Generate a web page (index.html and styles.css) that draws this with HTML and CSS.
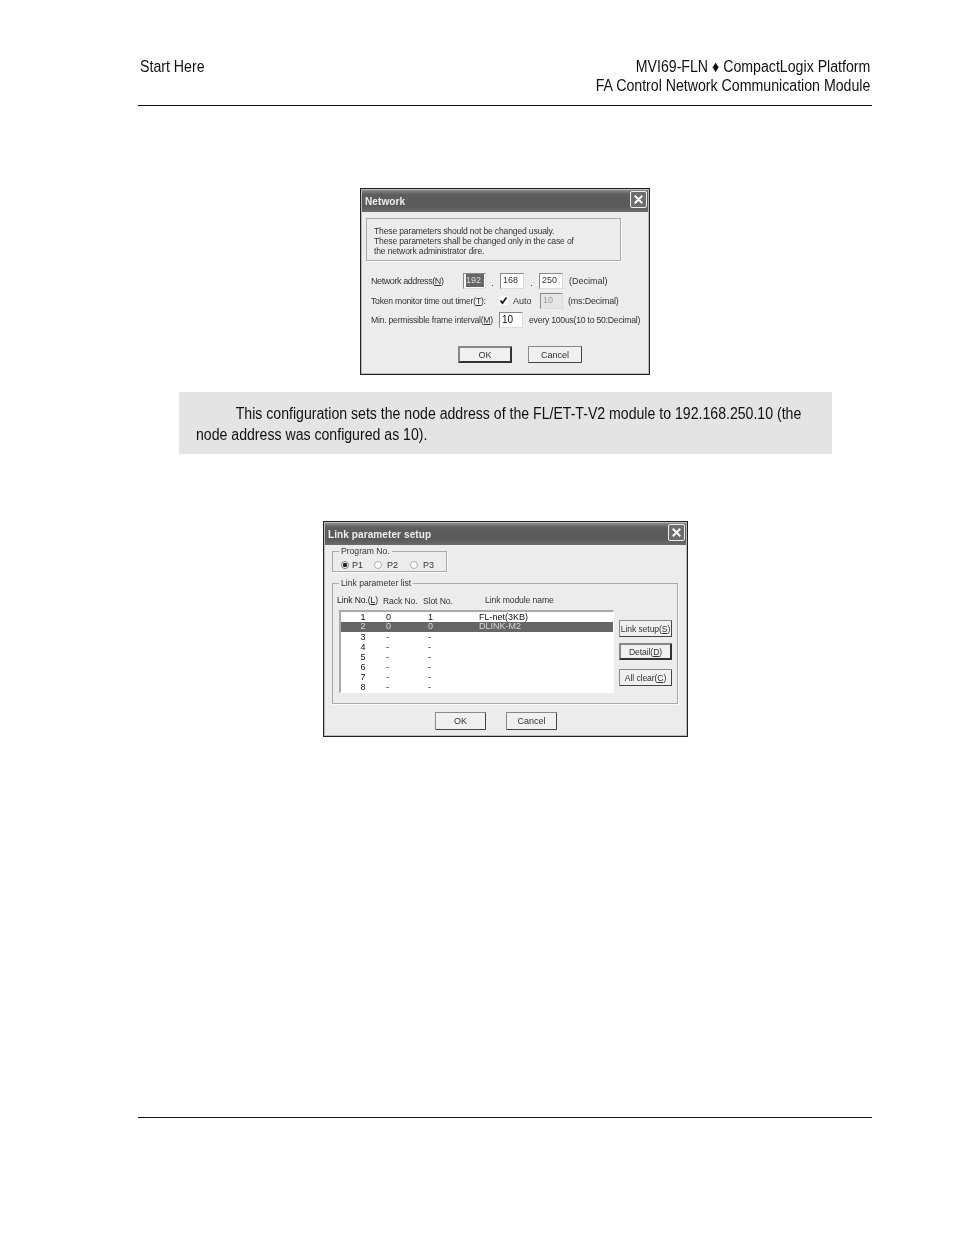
FILE: index.html
```html
<!DOCTYPE html>
<html lang="en">
<head>
<meta charset="utf-8">
<title>Start Here</title>
<link rel="stylesheet" href="styles.css">
</head>
<body>
<div class="page">
  <header class="head">
    <div class="head-left">Start Here</div>
    <div class="head-right">MVI69-FLN ♦ CompactLogix Platform<br>FA Control Network Communication Module</div>
  </header>

  <section class="dlg dlg-net">
    <div class="title"><span class="title-text">Network</span><span class="close"><svg viewBox="0 0 16 16" width="16" height="16"><path d="M4 4L12 12M12 4L4 12" stroke="#fff" stroke-width="2" fill="none"/></svg></span></div>
    <div class="net-body">
      <div class="info">These parameters should not be changed usualy.<br>These parameters shall be changed only in the case of<br>the network administrator dire.</div>
      <div class="row row-a">
        <span class="lbl lbl-a">Network address(<u>N</u>)</span>
        <span class="inp inp-sel"><b>192</b></span><span class="dot">.</span>
        <span class="inp inp-b">168</span><span class="dot">.</span>
        <span class="inp inp-b">250</span>
        <span class="after-a">(Decimal)</span>
      </div>
      <div class="row row-b">
        <span class="lbl lbl-b">Token monitor time out timer(<u>T</u>):</span>
        <span class="chk"><svg viewBox="0 0 9 9" width="9" height="9"><path d="M1.5 4.5L3.5 7L7.5 1.5" stroke="#111" stroke-width="1.7" fill="none"/></svg></span>
        <span class="auto">Auto</span>
        <span class="inp inp-off">10</span>
        <span class="after-b">(ms:Decimal)</span>
      </div>
      <div class="row row-c">
        <span class="lbl lbl-b">Min. permissible frame interval(<u>M</u>)</span>
        <span class="inp inp-c">10</span>
        <span class="after-c">every 100us(10 to 50:Decimal)</span>
      </div>
      <div class="btns btns-net">
        <span class="btn btn-def btn-net">OK</span>
        <span class="btn btn-net">Cancel</span>
      </div>
    </div>
  </section>

  <aside class="note"><p class="note-text">This configuration sets the node address of the FL/ET-T-V2 module to 192.168.250.10 (the node address was configured as 10).</p></aside>

  <section class="dlg dlg-link">
    <div class="title"><span class="title-text">Link parameter setup</span><span class="close"><svg viewBox="0 0 16 16" width="16" height="16"><path d="M4 4L12 12M12 4L4 12" stroke="#fff" stroke-width="2" fill="none"/></svg></span></div>
    <div class="link-body">
      <fieldset class="grp grp-prog">
        <legend>Program No.</legend>
        <div class="radios">
          <span class="radio radio-on"></span><span class="rl">P1</span>
          <span class="radio"></span><span class="rl">P2</span>
          <span class="radio"></span><span class="rl">P3</span>
        </div>
      </fieldset>
      <fieldset class="grp grp-list">
        <legend>Link parameter list</legend>
        <div class="cols">
          <span class="c1">Link No.(<u>L</u>)</span><span class="c2">Rack No.</span><span class="c3">Slot No.</span><span class="c4">Link module name</span>
        </div>
        <div class="list-wrap">
          <div class="list">
            <div class="li"><span>1</span><span>0</span><span>1</span><span>FL-net(3KB)</span></div>
            <div class="li li-sel"><span>2</span><span>0</span><span>0</span><span>DLINK-M2</span></div>
            <div class="li"><span>3</span><span>-</span><span>-</span><span></span></div>
            <div class="li"><span>4</span><span>-</span><span>-</span><span></span></div>
            <div class="li"><span>5</span><span>-</span><span>-</span><span></span></div>
            <div class="li"><span>6</span><span>-</span><span>-</span><span></span></div>
            <div class="li"><span>7</span><span>-</span><span>-</span><span></span></div>
            <div class="li"><span>8</span><span>-</span><span>-</span><span></span></div>
          </div>
          <div class="side">
            <span class="btn btn-side">Link setup(<u>S</u>)</span>
            <span class="btn btn-side btn-def">Detail(<u>D</u>)</span>
            <span class="btn btn-side">All clear(<u>C</u>)</span>
          </div>
        </div>
      </fieldset>
      <div class="btns btns-link">
        <span class="btn btn-link">OK</span>
        <span class="btn btn-link">Cancel</span>
      </div>
    </div>
  </section>

  <footer class="foot"></footer>
</div>
</body>
</html>
```
FILE: styles.css
```css
* { box-sizing: border-box; }
html, body { margin: 0; padding: 0; background: #fff; }
body { font-family: "Liberation Sans", Arial, sans-serif; color: #111; }
.page { width: 954px; height: 1235px; padding: 57px 82px 0 138px; overflow: hidden; }

.head {
  display: flex; justify-content: space-between; height: 49px;
  padding: 0 2px; border-bottom: 1px solid #111;
  font-size: 16px; line-height: 19px;
}
.head-left { transform: scaleX(0.885); transform-origin: left top; }
.head-right { text-align: right; transform: scaleX(0.885); transform-origin: right top; }

.dlg {
  background: #ececec; border: 1px solid #222;
  box-shadow: inset 0 0 0 1px #bbb;
  font-size: 9px; line-height: 10px; color: #333;
  filter: blur(0.4px);
}
.dlg-net { width: 290px; height: 187px; margin: 82px 0 0 222px; }
.dlg-link { width: 365px; height: 216px; margin: 67px 0 0 185px; }

.title {
  height: 22px; margin: 1px 1px 0; padding: 0 1px 3px 3px;
  display: flex; justify-content: space-between; align-items: center;
  background: linear-gradient(#8a8a8a, #5e5e5e 20%, #5a5a5a 75%, #6c6c6c);
  color: #eee; font-size: 10px; font-weight: bold; letter-spacing: 0.1px;
}
.title-text { padding-top: 4px; }
.close {
  width: 17px; height: 17px; display: flex; align-items: center; justify-content: center;
  border: 1px solid #eee; border-radius: 2px; background: #6d6d6d;
}
.close svg { width: 15px; height: 15px; }

.net-body { padding: 6px 0 0 5px; }
.info {
  width: 255px; height: 43px; padding: 7px 0 0 7px;
  border: 1px solid #a9a9a9; box-shadow: 1px 1px 0 #fafafa;
  font-size: 8.6px; letter-spacing: -0.17px;
}
.row { display: flex; align-items: center; height: 19px; padding-left: 5px; white-space: nowrap; }
.row-a { margin-top: 11px; height: 18px; }
.row-b { margin-top: 1px; }
.lbl { flex: none; }
.lbl-a { width: 92px; letter-spacing: -0.42px; }
.lbl-b { width: 128px; font-size: 8.6px; letter-spacing: -0.22px; }
.inp {
  flex: none; height: 16px; width: 24px; padding: 0 2px;
  background: #fff; border: 1px solid #888; border-right-color: #ddd; border-bottom-color: #ddd;
  line-height: 13px;
}
.inp-sel { width: 23px; margin-right: -1px; border-color: #888 #ddd #ddd #888; }
.inp-sel b { display: inline-block; width: 18px; background: #666; color: #ddd; font-weight: normal; }
.dot { flex: none; width: 15px; text-align: center; padding-top: 4px; }
.after-a { margin-left: 6px; }
.chk { flex: none; width: 9px; height: 9px; background: #fff; display: block; }
.chk svg { display: block; }
.auto { margin-left: 5px; width: 27px; flex: none; }
.inp-off { width: 23px; background: #e6e6e6; color: #999; }
.after-b { margin-left: 5px; letter-spacing: -0.2px; }
.inp-c { width: 24px; font-size: 10px; color: #111; }
.after-c { margin-left: 6px; font-size: 8.7px; letter-spacing: -0.25px; }

.btns { display: flex; }
.btn {
  display: flex; align-items: center; justify-content: center; flex: none;
  background: #f0f0f0; border: 1px solid #888; border-right-color: #444; border-bottom-color: #444;
  border-radius: 1px;
}
.btn-def { border: 2px solid #333; border-top-color: #888; border-left-color: #888; }
.btns-net { gap: 16px; margin: 17px 0 0 92px; }
.btn-net { width: 54px; height: 17px; }

.link-body { padding: 2px 8px 0 8px; }
.grp { margin: 0; padding: 0; border: 1px solid #aaa; box-shadow: 1px 1px 0 #fafafa; min-width: 0; }
.grp legend { padding: 0 2px; margin-left: 6px; font-size: 8.6px; line-height: 9px; }
.grp-prog { width: 115px; height: 25px; }
.radios { display: flex; align-items: center; padding: 0 0 0 8px; height: 13px; margin-top: 2px; }
.radio { flex: none; width: 8px; height: 8px; border-radius: 50%; background: #fff; border: 1px solid #aaa; }
.radio-on { background: radial-gradient(circle, #222 0 2px, #fff 2.3px); border-color: #777; }
.rl { flex: none; width: 25px; padding-left: 3px; }
.rl:nth-of-type(n+3) { width: 28px; padding-left: 5px; }

.grp-list { width: 346px; height: 125px; margin-top: 7px; }
.cols { display: flex; height: 10px; margin-top: 7px; padding-left: 4px; white-space: nowrap; font-size: 8.6px; letter-spacing: -0.1px; }
.c1 { width: 46px; color: #222; }
.c2 { width: 40px; margin-top: 1px; }
.c3 { width: 62px; margin-top: 1px; }
.list-wrap { display: flex; margin: 5px 0 0 6px; }
.list {
  width: 275px; height: 83px; background: #fff;
  border: 1px solid #999; border-width: 2px 1px 1px 2px; border-color: #aaa #fff #fff #aaa;
  font-size: 9px; line-height: 10px; color: #111;
}
.li { display: grid; grid-template-columns: 44px 43px 51px 1fr; height: 10px; }
.li span:nth-child(1) { text-align: center; }
.li span:nth-child(2) { padding-left: 1px; }
.li-sel { background: #666; color: #d8d8d8; line-height: 8px; }
.side { display: flex; flex-direction: column; gap: 6px; margin: 10px 0 0 5px; }
.btn-side { width: 53px; height: 17px; white-space: nowrap; font-size: 8.6px; letter-spacing: -0.1px; }
.side .btn-side:nth-child(3) { margin-top: 3px; }

.btns-link { gap: 20px; margin: 8px 0 0 103px; }
.btn-link { width: 51px; height: 18px; }

.note {
  width: 653px; height: 62px; margin: 17px 0 0 41px; padding: 11px 0 0 17px;
  background: #e4e4e4;
}
.note-text {
  width: 690px; margin: 0; font-size: 16px; line-height: 21px; text-indent: 45px;
  transform: scaleX(0.882); transform-origin: left top;
}
.foot { height: 1px; background: #111; margin-top: 380px; }
```
